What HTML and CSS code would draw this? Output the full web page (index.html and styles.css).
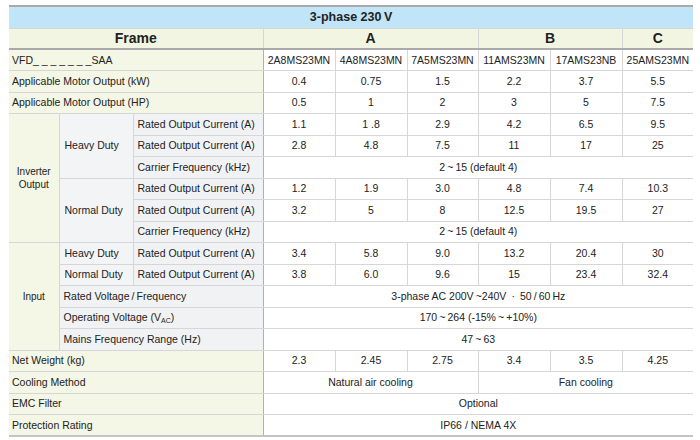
FILE: index.html
```html
<!DOCTYPE html>
<html>
<head>
<meta charset="utf-8">
<link rel="stylesheet" href="styles.css">
</head>
<body>
<table class="spec">
  <colgroup>
    <col class="c-group"><col class="c-duty"><col class="c-param">
    <col class="c-d1"><col class="c-d2"><col class="c-d3"><col class="c-d4"><col class="c-d5"><col class="c-d6">
  </colgroup>
  <tr class="title"><td colspan="9">3-phase 230&#8201;V</td></tr>
  <tr class="frame"><td colspan="3">Frame</td><td colspan="3">A</td><td colspan="2">B</td><td>C</td></tr>
  <tr><td colspan="3" class="lab">VFD_ _ _ _ _ _ _SAA</td><td>2A8MS23MN</td><td>4A8MS23MN</td><td>7A5MS23MN</td><td>11AMS23MN</td><td>17AMS23NB</td><td>25AMS23MN</td></tr>
  <tr><td colspan="3" class="lab">Applicable Motor Output (kW)</td><td>0.4</td><td>0.75</td><td>1.5</td><td>2.2</td><td>3.7</td><td>5.5</td></tr>
  <tr><td colspan="3" class="lab">Applicable Motor Output (HP)</td><td>0.5</td><td>1</td><td>2</td><td>3</td><td>5</td><td>7.5</td></tr>
  <tr><td rowspan="6" class="grp">Inverter<br>Output</td><td rowspan="3" class="sub">Heavy Duty</td><td class="par">Rated Output Current (A)</td><td>1.1</td><td>1 .8</td><td>2.9</td><td>4.2</td><td>6.5</td><td>9.5</td></tr>
  <tr><td class="par">Rated Output Current (A)</td><td>2.8</td><td>4.8</td><td>7.5</td><td>11</td><td>17</td><td>25</td></tr>
  <tr><td class="par">Carrier Frequency (kHz)</td><td colspan="6">2&#8201;~&#8201;15 (default 4)</td></tr>
  <tr><td rowspan="3" class="sub">Normal Duty</td><td class="par">Rated Output Current (A)</td><td>1.2</td><td>1.9</td><td>3.0</td><td>4.8</td><td>7.4</td><td>10.3</td></tr>
  <tr><td class="par">Rated Output Current (A)</td><td>3.2</td><td>5</td><td>8</td><td>12.5</td><td>19.5</td><td>27</td></tr>
  <tr><td class="par">Carrier Frequency (kHz)</td><td colspan="6">2&#8201;~&#8201;15 (default 4)</td></tr>
  <tr><td rowspan="5" class="grp">Input</td><td class="sub">Heavy Duty</td><td class="par">Rated Output Current (A)</td><td>3.4</td><td>5.8</td><td>9.0</td><td>13.2</td><td>20.4</td><td>30</td></tr>
  <tr><td class="sub">Normal Duty</td><td class="par">Rated Output Current (A)</td><td>3.8</td><td>6.0</td><td>9.6</td><td>15</td><td>23.4</td><td>32.4</td></tr>
  <tr><td colspan="2" class="par">Rated Voltage&#8201;/&#8201;Frequency</td><td colspan="6">3-phase AC 200V&#8201;~240V&#8201; · &#8201;50&#8201;/&#8201;60&#8201;Hz</td></tr>
  <tr><td colspan="2" class="par">Operating Voltage (V<sub>AC</sub>)</td><td colspan="6">170&#8201;~&#8201;264 (-15%&#8201;~&#8201;+10%)</td></tr>
  <tr><td colspan="2" class="par">Mains Frequency Range (Hz)</td><td colspan="6">47&#8201;~&#8201;63</td></tr>
  <tr><td colspan="3" class="lab">Net Weight (kg)</td><td>2.3</td><td>2.45</td><td>2.75</td><td>3.4</td><td>3.5</td><td>4.25</td></tr>
  <tr><td colspan="3" class="lab">Cooling Method</td><td colspan="3">Natural air cooling</td><td colspan="3">Fan cooling</td></tr>
  <tr><td colspan="3" class="lab">EMC Filter</td><td colspan="6">Optional</td></tr>
  <tr class="last"><td colspan="3" class="lab">Protection Rating</td><td colspan="6">IP66 / NEMA 4X</td></tr>
</table>
</body>
</html>
```
FILE: styles.css
```css
html, body {
  margin: 0;
  padding: 0;
  background: #ffffff;
}
body {
  padding: 5px 0 0 9px;
  font-family: "Liberation Sans", Arial, sans-serif;
  font-size: 10.5px;
  color: #222222;
}
.spec {
  width: 684px;
  table-layout: fixed;
  border-collapse: collapse;
  border-top: 2px solid #a9a9a9;
  border-bottom: 2px solid #c4c4c4;
}
.c-group { width: 50px; }
.c-duty { width: 74px; }
.c-param { width: 130px; }
.c-d1, .c-d2, .c-d4, .c-d5 { width: 72px; }
.c-d3, .c-d6 { width: 71px; }
.spec td {
  height: 21.5px;
  padding: 0 3px;
  border: 1px solid #d6d6d6;
  text-align: center;
  white-space: nowrap;
  box-sizing: border-box;
  line-height: 13px;
}
.spec td:first-child { border-left: none; }
.spec td:last-child { border-right: none; }
.spec .title td {
  height: 22px;
  background: #c0e4f8;
  font-weight: bold;
  font-size: 12.5px;
  border-top: none;
}
.spec .frame td {
  height: 21px;
  background: #f3f5e3;
  font-weight: bold;
  font-size: 14px;
  border-bottom: 2px solid #a9a9a9;
}
.spec .lab {
  text-align: left;
  background: #f4f6e6;
  border-right-color: #b0b0b0;
}
.spec .grp {
  background: #f4f6e6;
  font-size: 10px;
  line-height: 13px;
}
.spec .sub {
  text-align: left;
  background: #f3f4f6;
  padding-left: 5px;
}
.spec .par {
  text-align: left;
  background: #f1f2f4;
  padding-left: 4px;
  border-right-color: #b0b0b0;
}
.spec sub {
  font-size: 7px;
  vertical-align: -2px;
  line-height: 0;
}
```
